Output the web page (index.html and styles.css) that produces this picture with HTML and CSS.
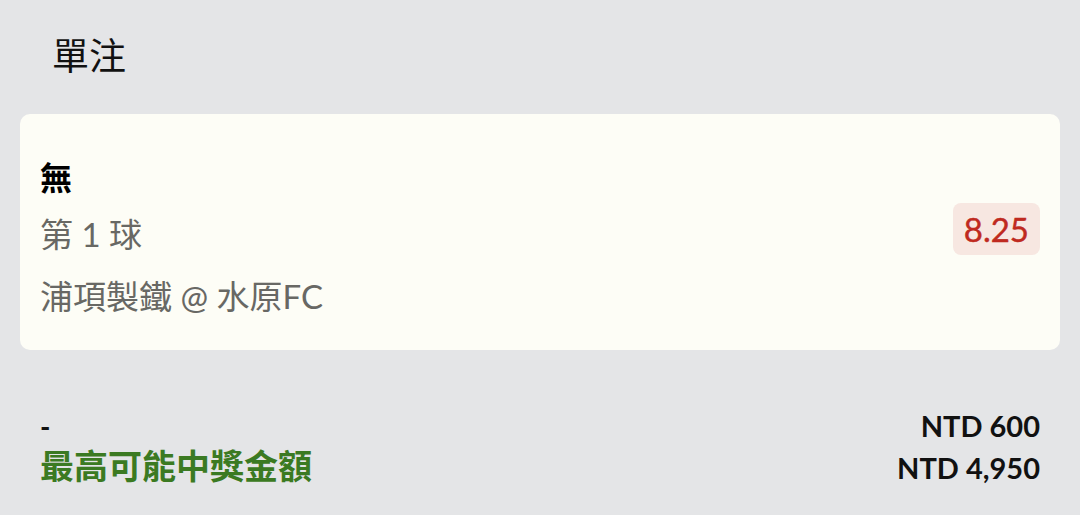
FILE: index.html
```html
<!DOCTYPE html>
<html lang="zh-Hant">
  <head>
    <meta charset="UTF-8">
    <meta name="viewport" content="width=device-width, initial-scale=1">
    <title>單注</title>
    <link rel="stylesheet" href="styles.css">
  </head>
  <body>

    <div class="page">

      <div class="slip-title">單注</div>

      <div class="card">
        <div class="card-info">
          <div class="pick">無</div>
          <div class="market">第 1 球</div>
          <div class="match">浦項製鐵 @ 水原FC</div>
        </div>
        <div class="odds">8.25</div>
      </div>

      <div class="summary">
        <div class="summary-row">
          <span class="stake-label">-</span>
          <span class="amount">NTD 600</span>
        </div>
        <div class="summary-row">
          <span class="payout-label">最高可能中獎金額</span>
          <span class="amount">NTD 4,950</span>
        </div>
      </div>

    </div>

  </body>
</html>
```

FILE: styles.css
```css
body { margin: 0; background: #e4e5e7 }
body { font-family: Lato, "Noto Sans CJK TC", sans-serif; color: #111 }

.page { padding: 0 20px }

.slip-title { font-size: 37px; line-height: 40px; padding: 36px 0 38px 32px; color: #111 }

/* card */

.card {
  display: flex;
  align-items: center;
  justify-content: space-between;
  background: #fdfdf6;
  border-radius: 10px;
  padding: 38px 20px 22px 20px;
}

.pick { font-size: 32px; font-weight: 700; line-height: 52px; color: #000 }
.market, .match { font-size: 33px; line-height: 64px; color: #686864 }
.market { line-height: 60px }

.odds {
  background: #f7e7e1;
  color: #bf2a20;
  font-size: 33px;
  line-height: 52px;
  padding: 0 11px;
  border-radius: 8px;
  margin-bottom: 22px;
  -webkit-text-stroke: 0.4px #bf2a20;
}

/* totals */

.summary { padding: 58px 20px 0 20px }
.summary-row { display: flex; justify-content: space-between; align-items: baseline }
.stake-label { font-size: 28px; font-weight: 700; line-height: 32px }
.payout-label { font-size: 34px; font-weight: 700; line-height: 46px; color: #3b7a22 }
.amount { font-size: 29px; font-weight: 700; color: #111 }
```
